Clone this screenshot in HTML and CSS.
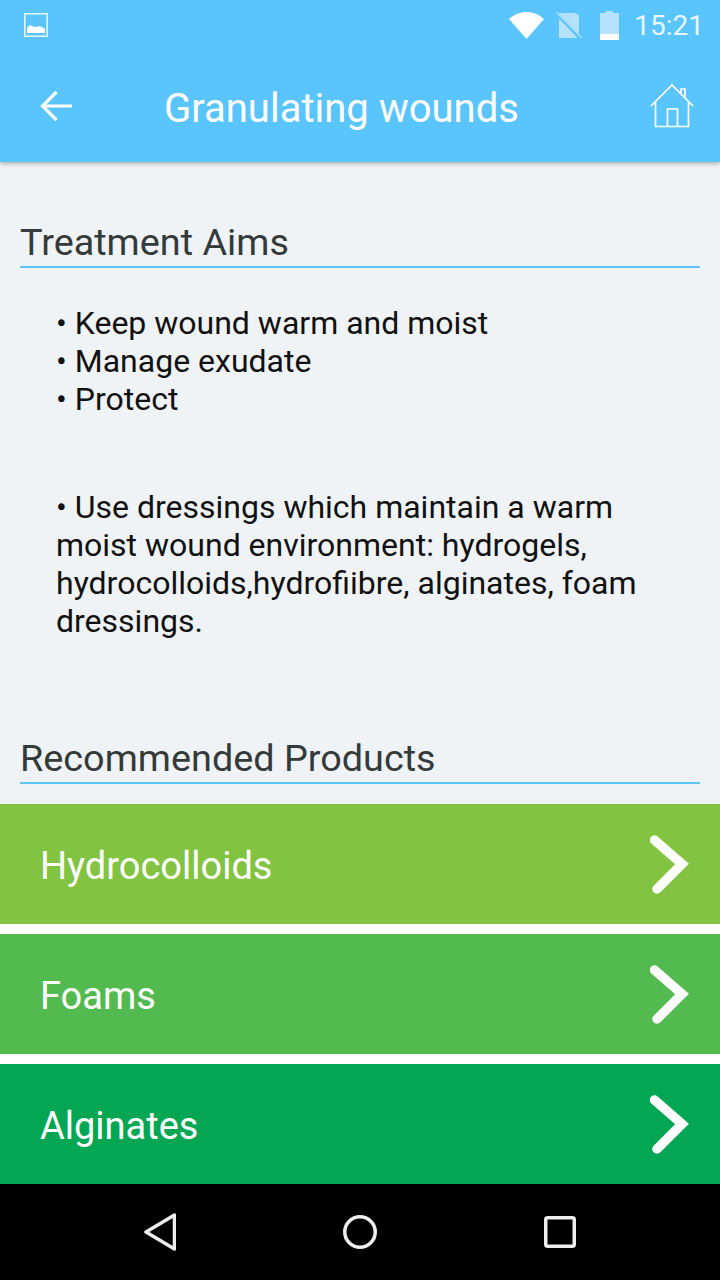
FILE: index.html
```html
<!DOCTYPE html>
<html lang="en">
<head>
<meta charset="utf-8">
<title>Granulating wounds</title>
<link rel="stylesheet" href="styles.css">
</head>
<body>
<div class="screen">
  <header class="header">
    <div class="status">
      <svg class="st-image" width="24" height="24" viewBox="0 0 24 24"><rect x="0.800" y="0.800" width="22.400" height="22.400" fill="none" stroke="#dff4ff" stroke-width="1.600"/><path d="M3 20v-5l3-3 3 1.500 3 0.500 3-1 3 1 3 2v4z" fill="#fff"/></svg>
      <div class="st-right">
        <svg class="st-wifi" width="36" height="28" viewBox="0 0 36 28"><path d="M0 8C10-1.500 25-1.500 35 8L17.500 28z" fill="#fff"/></svg>
        <svg class="st-sim" width="26" height="27" viewBox="0 0 26 27"><path d="M3 1h17l3 3v22H3z" fill="#b5e2fd"/><path d="M-1 0L25 27" stroke="#5ac5fd" stroke-width="3.500"/><path d="M0 0L26 26" stroke="#b5e2fd" stroke-width="1.200"/></svg>
        <svg class="st-batt" width="19" height="29" viewBox="0 0 19 29"><path d="M6 0h7v2h6v27H0V2h6z" fill="#b5e2fd"/><rect y="23" width="19" height="6" fill="#fff"/></svg>
        <span class="st-time">15:21</span>
      </div>
    </div>
    <div class="toolbar">
      <svg class="tb-back" width="36" height="36" viewBox="0 0 36 36"><path d="M4 18H34M18.500 4L4.500 18L18.500 32" fill="none" stroke="#fff" stroke-width="3.200"/></svg>
      <h1 class="tb-title">Granulating wounds</h1>
      <svg class="tb-home" width="44" height="44" viewBox="0 0 44 44"><path d="M1 22L22 1L43 22M5.500 18V42.500H38.500V18M17.500 42.500V25H27.500V42.500M31 10V5H35V14" fill="none" stroke="#fff" stroke-width="1.700"/></svg>
    </div>
  </header>
  <main class="content">
    <h2 class="section-title first">Treatment Aims</h2>
    <p class="body-text aims">• Keep wound warm and moist<br>• Manage exudate<br>• Protect</p>
    <p class="body-text advice">• Use dressings which maintain a warm moist wound environment: hydrogels, hydrocolloids,hydrofiibre, alginates, foam dressings.</p>
    <h2 class="section-title second">Recommended Products</h2>
    <div class="products">
      <a class="product lime"><span class="product-label">Hydrocolloids</span><svg class="chev" width="40" height="60" viewBox="0 0 40 60"><path d="M4.500 6L32 30L7 55" fill="none" stroke="#fff" stroke-width="9.500" stroke-linecap="round"/></svg></a>
      <a class="product green"><span class="product-label">Foams</span><svg class="chev" width="40" height="60" viewBox="0 0 40 60"><path d="M4.500 6L32 30L7 55" fill="none" stroke="#fff" stroke-width="9.500" stroke-linecap="round"/></svg></a>
      <a class="product emerald"><span class="product-label">Alginates</span><svg class="chev" width="40" height="60" viewBox="0 0 40 60"><path d="M4.500 6L32 30L7 55" fill="none" stroke="#fff" stroke-width="9.500" stroke-linecap="round"/></svg></a>
    </div>
  </main>
  <nav class="navbar">
    <svg width="32" height="38" viewBox="0 0 32 38"><path d="M2 19L30.500 2V36z" fill="none" stroke="#eee" stroke-width="3.500" stroke-linejoin="round"/></svg>
    <svg width="34" height="34" viewBox="0 0 34 34"><circle cx="17" cy="17" r="15.250" fill="none" stroke="#eee" stroke-width="3.500"/></svg>
    <svg width="32" height="32" viewBox="0 0 32 32"><rect x="1.750" y="1.750" width="28.500" height="28.500" rx="2" fill="none" stroke="#eee" stroke-width="3.500"/></svg>
  </nav>
</div>
</body>
</html>
```
FILE: styles.css
```css
* { box-sizing: border-box; }
html, body { margin: 0; padding: 0; }
body { font-family: Roboto, "Noto Sans", sans-serif; background: #eff3f6; }
.screen { width: 720px; height: 1280px; display: flex; flex-direction: column; overflow: hidden; }
.header { height: 162px; background: #5ac5fd; box-shadow: 0 2px 4px rgba(0,0,0,.25); display: flex; flex-direction: column; position: relative; }
.status { height: 50px; display: flex; align-items: center; justify-content: space-between; padding: 0 16px 0 24px; }
.st-right { display: flex; align-items: center; }
.st-wifi { margin-right: 11px; }
.st-sim { margin-right: 18px; }
.st-batt { margin-right: 15px; }
.st-time { padding-top: 2px; color: #e8f6ff; font-size: 28px; font-weight: 400; line-height: 50px; }
.toolbar { flex: 1; display: flex; align-items: center; padding: 0 26px 0 38px; }
.tb-title { flex: 1; margin: 0 0 0 90px; padding-top: 5px; color: #fff; font-size: 40px; font-weight: 400; line-height: 44px; white-space: nowrap; }
.content { flex: 1; display: flex; flex-direction: column; }
.section-title { margin: 0 20px; border-bottom: 2px solid #5ac5fd; color: #343a3a; font-size: 37.800px; font-weight: 400; line-height: 44px; height: 50px; padding-top: 2px; }
.section-title.first { margin-top: 56px; }
.section-title.second { margin-top: 94px; }
.body-text { margin: 0; padding: 0 56px; color: #111; font-size: 32px; line-height: 38px; }
.aims { margin-top: 36px; }
.advice { margin-top: 70px; }
.products { margin-top: 20px; display: flex; flex-direction: column; gap: 10px; background: #fff; }
.product { height: 120px; display: flex; align-items: center; justify-content: space-between; padding: 0 30px 0 40px; color: #fff; font-size: 38px; }
.product-label { padding-top: 4px; }
.lime { background: #82c341; }
.green { background: #53ba4f; }
.emerald { background: #03a653; }
.navbar { height: 96px; background: #000; display: flex; align-items: center; justify-content: space-between; padding: 0 144px; }
```
